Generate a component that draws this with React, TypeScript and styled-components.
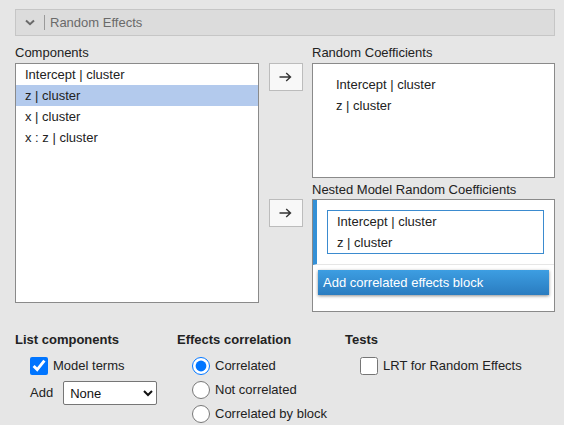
import React from 'react';
import styled, { createGlobalStyle } from 'styled-components';

const GlobalStyle = createGlobalStyle`
    html, body {
        margin: 0;
        padding: 0;
        background: #e6e6e6;
    }
    body {
        font-family: "Liberation Sans", Arial, sans-serif;
        font-size: 13px;
        color: #222;
    }
`;

const Page = styled.div`
    width: 564px;
    height: 425px;
    box-sizing: border-box;
    padding: 9px 9px 0 15px;
    overflow: hidden;
`;

const SectionHeader = styled.div`
    height: 27px;
    box-sizing: border-box;
    display: flex;
    align-items: center;
    padding-left: 9px;
    background: #dcdcdc;
    border: 1px solid #c6c6c6;
    color: #6a6a6a;
`;

const Divider = styled.span`
    width: 1px;
    height: 15px;
    background: #9a9a9a;
    margin: 0 5px 0 9px;
`;

const Columns = styled.div`
    display: grid;
    grid-template-columns: 244px 1fr 243px;
    grid-template-rows: 27px 115px 21px 113px;
`;

const FieldLabel = styled.div<{ $row: number; $col: number; $pad: number }>`
    grid-row: ${p => p.$row};
    grid-column: ${p => p.$col};
    align-self: end;
    line-height: 15px;
    padding-bottom: ${p => p.$pad}px;
    white-space: nowrap;
`;

const ListBox = styled.div`
    grid-row: 2 / span 3;
    grid-column: 1;
    align-self: start;
    height: 240px;
    box-sizing: border-box;
    background: #fff;
    border: 1px solid #8a8a8a;
`;

const ListItem = styled.div<{ $selected?: boolean }>`
    height: 21px;
    line-height: 21px;
    padding-left: 9px;
    background: ${p => (p.$selected ? '#b3caed' : 'transparent')};
`;

const ArrowButton = styled.button<{ $row: number }>`
    grid-row: ${p => p.$row};
    grid-column: 2;
    align-self: start;
    justify-self: center;
    width: 34px;
    height: 28px;
    padding: 0;
    display: flex;
    align-items: center;
    justify-content: center;
    background: #f8f8f8;
    border: 1px solid #bcbcbc;
    color: #333;
`;

const TargetBox = styled.div<{ $row: number }>`
    grid-row: ${p => p.$row};
    grid-column: 3;
    box-sizing: border-box;
    background: #fff;
    border: 1px solid #8a8a8a;
`;

const PlainList = styled.div`
    padding: 10px 0 0 23px;
    line-height: 21px;
`;

const CorrelatedBlock = styled.div`
    border-left: 4px solid #3490d6;
    border-bottom: 1px solid #e6e6e6;
    padding: 10px;
`;

const BlockList = styled.div`
    border: 1px solid #3b8bcf;
    padding-left: 9px;
    line-height: 21px;
`;

const AddBlockButton = styled.button`
    display: block;
    width: calc(100% - 10px);
    height: 25px;
    margin: 5px 5px 0;
    padding: 0 0 0 5px;
    text-align: left;
    font: inherit;
    color: #fff;
    border: none;
    background: linear-gradient(#3d9ee2, #2a7cc0);
    box-shadow: 0 1px 3px rgba(0, 0, 0, 0.45);
`;

const Options = styled.div`
    display: grid;
    grid-template-columns: 162px 168px 1fr;
    margin-top: 20px;
`;

const OptionGroup = styled.div`
    display: flex;
    flex-direction: column;
    gap: 6px;
`;

const GroupTitle = styled.div`
    font-weight: bold;
    line-height: 15px;
    margin-bottom: 4px;
`;

const OptionRow = styled.label`
    display: flex;
    align-items: center;
    gap: 5px;
    padding-left: 15px;
    min-height: 18px;
    line-height: 18px;
    white-space: nowrap;
`;

const Box = styled.input`
    width: 18px;
    height: 18px;
    margin: 0;
    accent-color: #0075ff;
`;

const AddLabel = styled.span`
    margin-right: 5px;
`;

const Select = styled.select`
    width: 94px;
    height: 24px;
    font-family: "Liberation Sans", Arial, sans-serif;
    font-size: 13px;
    color: #111;
    background: #fff;
    border: 1px solid #767676;
    border-radius: 2px;
    padding: 0 2px;
`;

const Chevron = () => (
    <svg width="10" height="7" viewBox="0 0 10 7">
        <path d="M1 1.5 L5 5.2 L9 1.5" fill="none" stroke="#6a6a6a" strokeWidth="2" />
    </svg>
);

const Arrow = () => (
    <svg width="13" height="10" viewBox="0 0 13 10">
        <path d="M0.5 5 H11.5 M7.2 1 L11.5 5 L7.2 9" fill="none" stroke="#333" strokeWidth="1.4" />
    </svg>
);

const components = ['Intercept | cluster', 'z | cluster', 'x | cluster', 'x : z | cluster'];
const chosen = ['Intercept | cluster', 'z | cluster'];

export default function App() {
    return (
        <Page>
            <GlobalStyle />
            <SectionHeader>
                <Chevron />
                <Divider />
                <span>Random Effects</span>
            </SectionHeader>

            <Columns>
                <FieldLabel $row={1} $col={1} $pad={3}>Components</FieldLabel>
                <FieldLabel $row={1} $col={3} $pad={3}>Random Coefficients</FieldLabel>
                <ListBox>
                    {components.map((c, i) => (
                        <ListItem key={c} $selected={i === 1}>{c}</ListItem>
                    ))}
                </ListBox>
                <ArrowButton $row={2}><Arrow /></ArrowButton>
                <TargetBox $row={2}>
                    <PlainList>
                        {chosen.map(c => <div key={c}>{c}</div>)}
                    </PlainList>
                </TargetBox>
                <FieldLabel $row={3} $col={3} $pad={2}>Nested Model Random Coefficients</FieldLabel>
                <ArrowButton $row={4}><Arrow /></ArrowButton>
                <TargetBox $row={4}>
                    <CorrelatedBlock>
                        <BlockList>
                            {chosen.map(c => <div key={c}>{c}</div>)}
                        </BlockList>
                    </CorrelatedBlock>
                    <AddBlockButton>Add correlated effects block</AddBlockButton>
                </TargetBox>
            </Columns>

            <Options>
                <OptionGroup>
                    <GroupTitle>List components</GroupTitle>
                    <OptionRow>
                        <Box type="checkbox" defaultChecked />
                        Model terms
                    </OptionRow>
                    <OptionRow>
                        <AddLabel>Add</AddLabel>
                        <Select defaultValue="none">
                            <option value="none">None</option>
                        </Select>
                    </OptionRow>
                </OptionGroup>
                <OptionGroup>
                    <GroupTitle>Effects correlation</GroupTitle>
                    <OptionRow>
                        <Box type="radio" name="corr" defaultChecked />
                        Correlated
                    </OptionRow>
                    <OptionRow>
                        <Box type="radio" name="corr" />
                        Not correlated
                    </OptionRow>
                    <OptionRow>
                        <Box type="radio" name="corr" />
                        Correlated by block
                    </OptionRow>
                </OptionGroup>
                <OptionGroup>
                    <GroupTitle>Tests</GroupTitle>
                    <OptionRow>
                        <Box type="checkbox" />
                        LRT for Random Effects
                    </OptionRow>
                </OptionGroup>
            </Options>
        </Page>
    );
}
